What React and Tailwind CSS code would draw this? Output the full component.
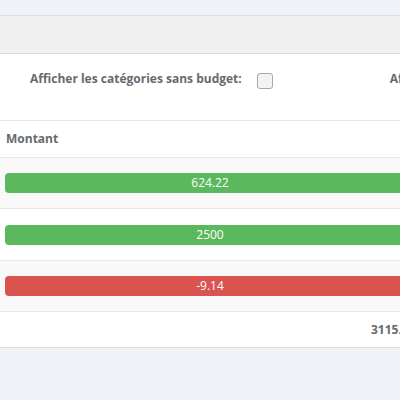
import React from 'react';

const rows = [
    { value: '624.22', color: 'bg-[#5cb85c]', striped: true, h: 'h-[51px]' },
    { value: '2500', color: 'bg-[#5cb85c]', striped: false, h: 'h-[52px]' },
    { value: '-9.14', color: 'bg-[#d9534f]', striped: true, h: 'h-[51px]' },
];

const App = () => {
    return (
        <div className="w-[400px] h-[400px] overflow-hidden bg-[#f1f2f7] pt-[15px] font-['Open_Sans',sans-serif] text-[#676a6c]">
            <div className="w-[460px] bg-white border-y border-[#dcdcdc] whitespace-nowrap">
                <div className="h-[38px] bg-[#f0f0f0] border-b border-[#d9d9d9]" />

                <div className="h-[67px] flex items-start pt-[16px] border-b border-[#e7e7e7]">
                    <span className="shrink-0 ml-[30px] text-[12px] leading-[18px] font-bold">Afficher les catégories sans budget:</span>
                    <span className="shrink-0 ml-[15px] mt-[3px] w-[16px] h-[16px] rounded-[3px] border border-[#a9a9a9] bg-[#f3f3f3]" />
                    <span className="shrink-0 ml-[117px] text-[12px] leading-[18px] font-bold">Afficher les catégories</span>
                </div>

                <div className="h-[37px] flex items-center px-[6px] border-b border-[#e7e7e7]">
                    <span className="text-[12px] font-bold">Montant</span>
                </div>

                {rows.map((row) => (
                    <div
                        key={row.value}
                        className={`${row.h} flex items-center pl-[5px] border-b border-[#e7e7e7] ${row.striped ? 'bg-[#f9f9f9]' : 'bg-white'}`}
                    >
                        <div className={`shrink-0 w-[410px] h-[20px] rounded-[4px] ${row.color} flex items-center justify-center text-white text-[12px]`}>
                            {row.value}
                        </div>
                    </div>
                ))}

                <div className="h-[35px] flex items-center">
                    <span className="ml-[371px] text-[12px] font-bold">3115.08</span>
                </div>
            </div>
        </div>
    );
};

export default App;
